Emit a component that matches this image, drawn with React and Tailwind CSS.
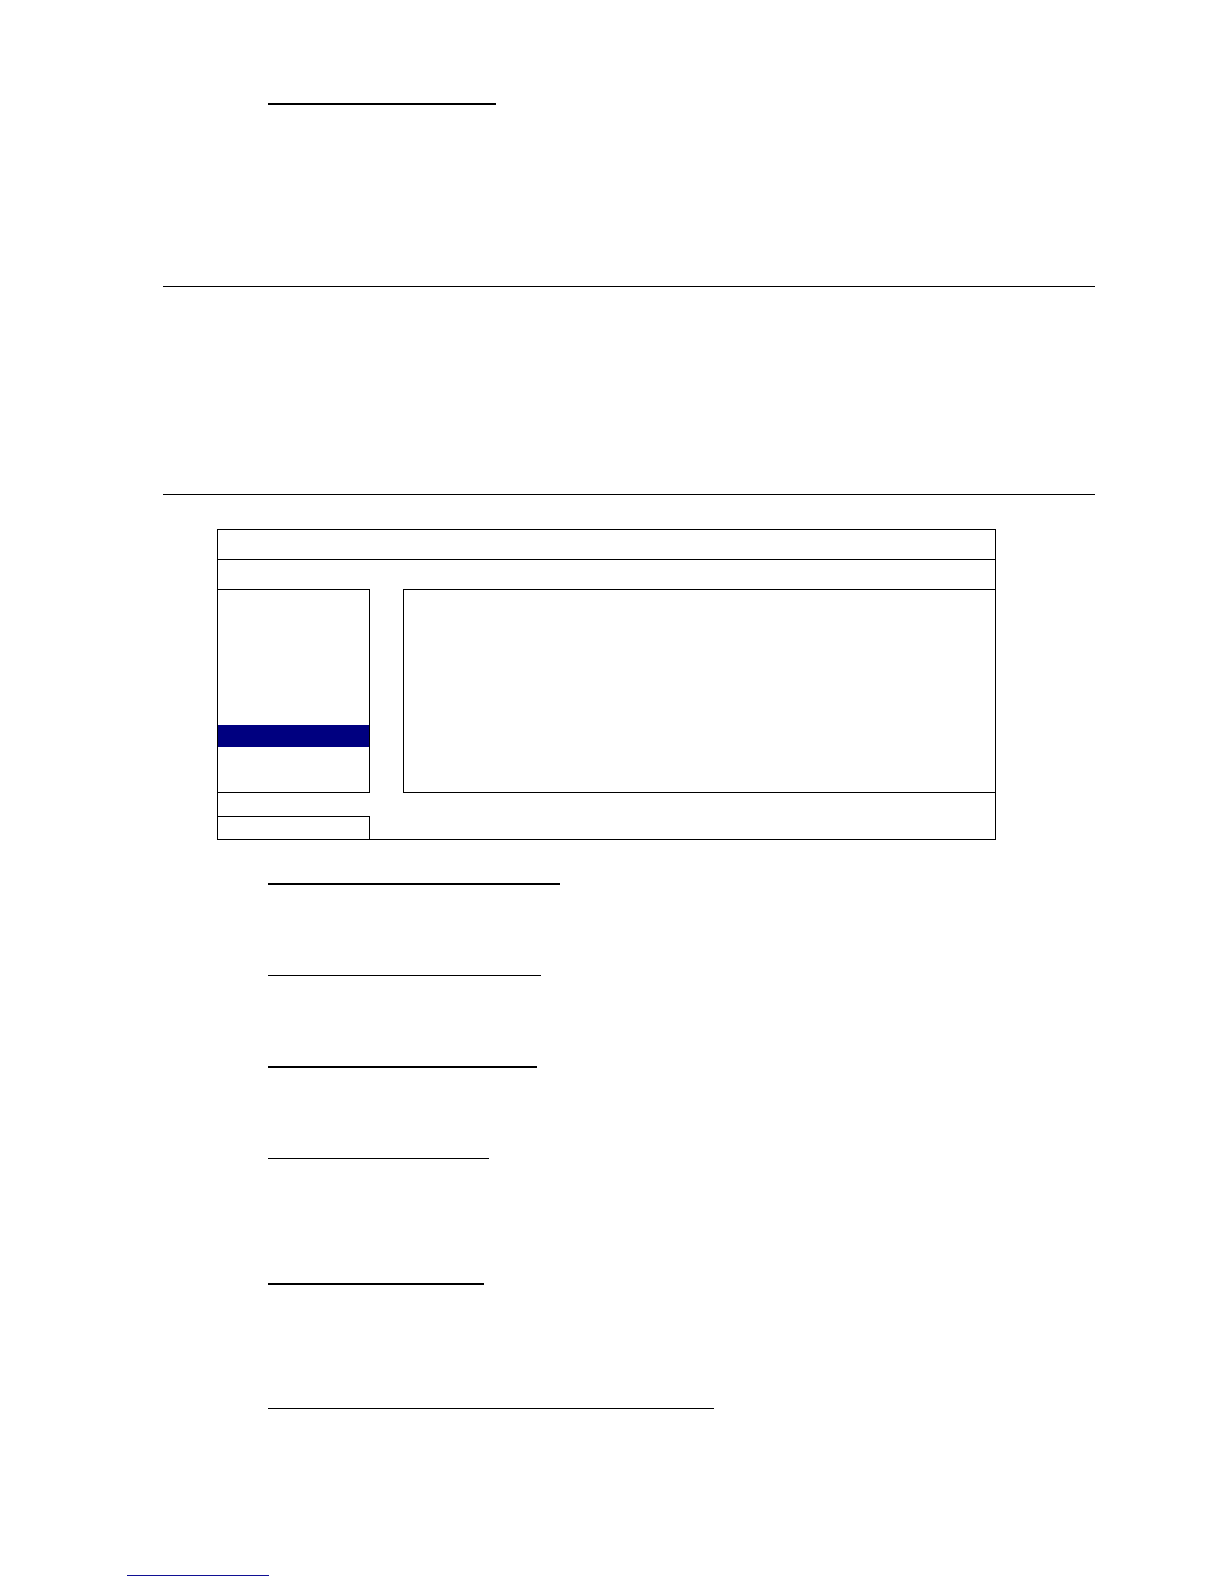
import React from 'react';

const fields = [
    { id: 'first', className: 'mt-[43px] w-[292px] border-b-2 border-black' },
    { id: 'second', className: 'mt-[90px] w-[273px] border-b border-black' },
    { id: 'third', className: 'mt-[90px] w-[269px] border-b-2 border-black' },
    { id: 'fourth', className: 'mt-[90px] w-[221px] border-b border-black' },
    { id: 'fifth', className: 'mt-[124px] w-[216px] border-b-2 border-black' },
    { id: 'sixth', className: 'mt-[123px] w-[446px] border-b border-black' },
];

function Underline({ className }) {
    return <div className={`ml-[105px] max-w-full ${className}`}></div>;
}

function SetupPanel() {
    return (
        <section className="mt-[34px] ml-[54px] mr-[99px] border border-black">
            <header className="h-[30px] border-b border-black"></header>
            <div className="h-[29px]"></div>
            <div className="flex h-[204px] gap-[33px]">
                <aside className="w-[152px] shrink-0 border-y border-r border-black pt-[135px]">
                    {/* selected row */}
                    <div className="h-[22px] bg-[#000080]"></div>
                </aside>
                <main className="flex-1 border-y border-l border-black"></main>
            </div>
            <footer className="pt-[23px]">
                <div className="h-[23px] w-[152px] border-t border-r border-black"></div>
            </footer>
        </section>
    );
}

export default function App() {
    return (
        <div className="min-h-screen bg-white pt-[103px] pb-2">
            <div className="ml-[163px] mr-[129px]">
                <Underline className="w-[228px] border-b-2 border-black" />
                <hr className="mt-[181px] border-black" />
                <hr className="mt-[207px] border-black" />
                <SetupPanel />
                {fields.map(field => (
                    <Underline key={field.id} className={field.className} />
                ))}
            </div>
            <div className="mt-[166px] ml-[127px] h-px w-[142px] bg-[#101094]"></div>
        </div>
    );
}
